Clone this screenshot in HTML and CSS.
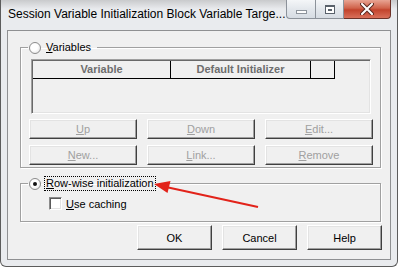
FILE: index.html
```html
<!DOCTYPE html>
<html lang="en">
<head>
    <meta charset="UTF-8">
    <title>Session Variable Initialization Block Variable Target</title>
    <link rel="stylesheet" href="styles.css">
</head>
<body>
    <div class="window">
        <div class="titlebar">
            <span class="title">Session Variable Initialization Block Variable Targe...</span>
            <div class="caption-buttons">
                <span class="cap cap-min"><i class="ico-min"></i></span>
                <span class="cap cap-max"><i class="ico-restore"></i></span>
                <span class="cap cap-close">
                    <svg width="14" height="12" viewBox="0 0 14 12">
                        <path d="M2 1 L12 11 M12 1 L2 11" stroke="#5a2a22" stroke-width="4" stroke-linecap="round"/>
                        <path d="M2 1 L12 11 M12 1 L2 11" stroke="#fff" stroke-width="2" stroke-linecap="round"/>
                    </svg>
                </span>
            </div>
        </div>

        <div class="client">
            <fieldset class="group group-vars">
                <legend class="group-label">
                    <span class="radio"></span>
                    <span class="label-text"><u>V</u>ariables</span>
                </legend>

                <div class="listview">
                    <div class="lv-header">
                        <span class="col col-var">Variable</span>
                        <span class="col col-init">Default Initializer</span>
                        <span class="col col-extra"></span>
                    </div>
                </div>

                <div class="btn-grid">
                    <button class="btn" disabled><u>U</u>p</button>
                    <button class="btn" disabled><u>D</u>own</button>
                    <button class="btn" disabled><u>E</u>dit...</button>
                    <button class="btn" disabled><u>N</u>ew...</button>
                    <button class="btn" disabled><u>L</u>ink...</button>
                    <button class="btn" disabled><u>R</u>emove</button>
                </div>
            </fieldset>

            <fieldset class="group group-rows">
                <legend class="group-label">
                    <span class="radio checked"></span>
                    <span class="label-text focus"><u>R</u>ow-wise initialization</span>
                </legend>

                <label class="check">
                    <span class="checkbox"></span>
                    <span><u>U</u>se caching</span>
                </label>
            </fieldset>

            <div class="dialog-buttons">
                <button class="btn btn-dialog">OK</button>
                <button class="btn btn-dialog">Cancel</button>
                <button class="btn btn-dialog">Help</button>
            </div>
        </div>
    </div>

    <!-- annotation arrow drawn over the dialog -->
    <svg class="annotation" width="398" height="268" viewBox="0 0 398 268">
        <line x1="258" y1="207" x2="166" y2="187" stroke="#e2231a" stroke-width="2.2"/>
        <polygon points="154,184 170.5,181 167.5,193" fill="#e2231a"/>
    </svg>
</body>
</html>
```

FILE: styles.css
```css
:root {
    --face: #f0f0f0;
    --frame: #e9ebee;
    --shadow: #a0a0a0;
    --dark: #696969;
    --disabled: #a0a0a0;
}

* {
    box-sizing: border-box;
}

body {
    margin: 0;
    width: 398px;
    height: 268px;
    overflow: hidden;
    position: relative;
    background: #ffffff;
    font-family: "Liberation Sans", Arial, sans-serif;
    font-size: 11px;
    color: #000;
}

.window {
    width: 398px;
    height: 267px;
    padding: 0 6px 6px 6px;
    background: linear-gradient(#c9cacc, var(--frame) 9px, var(--frame));
    border: 1px solid #5c5c5c;
    border-top: none;
    border-radius: 0 0 6px 6px;
}

.titlebar {
    height: 30px;
    display: flex;
    justify-content: space-between;
}

.title {
    padding: 7px 0 0 1px;
    font-size: 12px;
    line-height: 15px;
    white-space: nowrap;
}

.caption-buttons {
    display: flex;
    height: 19px;
}

.cap {
    display: flex;
    align-items: center;
    justify-content: center;
    width: 29px;
    height: 19px;
    border: 1px solid #8c929a;
    border-top: none;
    background: linear-gradient(#f4f6f8, #e3e7ec 50%, #d6dce3);
}

.cap-min {
    border-radius: 0 0 0 4px;
    border-right: none;
}

.cap-close {
    width: 47px;
    border-left: none;
    border-color: #6d3228;
    border-radius: 0 0 4px 0;
    background: linear-gradient(#e8a493, #d0634b 45%, #c2432c 55%, #d9705a);
}

.ico-min {
    display: block;
    width: 11px;
    height: 4px;
    margin-top: 5px;
    border: 1px solid #8d949c;
    background: #fdfdfd;
}

.ico-restore {
    display: block;
    width: 10px;
    height: 9px;
    border: 1px solid #59616b;
    border-top-width: 2px;
    background: #fff;
    box-shadow: inset 0 0 0 2px #fff, inset 0 0 0 3px #59616b;
}

.client {
    height: 230px;
    background: var(--face);
    border: 1px solid #8f9092;
    display: flex;
    flex-direction: column;
}

.group {
    margin: 0 9px 0 12px;
    padding: 0;
    border: 1px solid var(--shadow);
    box-shadow: inset 1px 1px 0 #fff, 1px 1px 0 #fff;
    min-width: 0;
}

.group-vars {
    margin-top: 10px;
    padding: 5px 0 2px 0;
}

.group-rows {
    margin-top: 9px;
    padding: 7px 0 11px 0;
}

.group-label {
    display: flex;
    align-items: center;
    height: 13px;
    margin-left: 7px;
    padding: 0 6px 0 1px;
    line-height: 13px;
}

.radio {
    width: 12px;
    height: 12px;
    border-radius: 50%;
    border: 1px solid #8b8b8b;
    background: radial-gradient(circle at 40% 40%, #ffffff 40%, #dcdcdc);
    display: flex;
    align-items: center;
    justify-content: center;
}

.radio.checked::after {
    content: "";
    width: 4px;
    height: 4px;
    border-radius: 50%;
    background: #111;
}

.label-text {
    margin-left: 5px;
}

.focus {
    margin-left: 4px;
    padding: 0 1px;
    line-height: 13px;
    outline: 1px dotted #000;
    outline-offset: 0;
}

.listview {
    width: 340px;
    height: 55px;
    margin-left: 10px;
    border: 1px solid;
    border-color: var(--shadow) #fff #fff var(--shadow);
    box-shadow: inset 1px 1px 0 var(--dark), inset -1px -1px 0 #e3e3e3;
    padding: 1px 0 0 1px;
}

.lv-header {
    display: flex;
    height: 18px;
}

.col {
    border-right: 1px solid #000;
    border-bottom: 1px solid #000;
    text-align: center;
    font-weight: bold;
    color: #6d6d6d;
    line-height: 17px;
}

.col-var {
    width: 138px;
}

.col-init {
    width: 140px;
}

.col-extra {
    width: 24px;
}

.btn-grid {
    display: grid;
    grid-template-columns: repeat(3, 108px);
    grid-auto-rows: 20px;
    column-gap: 10px;
    row-gap: 6px;
    margin: 5px 0 0 8px;
}

.btn {
    font-family: inherit;
    font-size: 11px;
    color: #000;
    background: var(--face);
    border: 1px solid;
    border-color: #fff #404040 #404040 #fff;
    box-shadow: inset -1px -1px 0 var(--shadow), inset 1px 1px 0 #e3e3e3;
    padding: 0;
    line-height: 16px;
}

.btn:disabled {
    color: var(--disabled);
}

.check {
    display: flex;
    align-items: center;
    height: 13px;
    margin-left: 28px;
}

.checkbox {
    width: 13px;
    height: 13px;
    margin-right: 4px;
    border: 1px solid;
    border-color: #8b8b8b #fff #fff #8b8b8b;
    box-shadow: inset 1px 1px 0 #5a5a5a, inset -1px -1px 0 #e3e3e3;
    background: #fff;
}

.dialog-buttons {
    display: flex;
    justify-content: flex-end;
    gap: 10px;
    margin: 3px 8px 0 0;
}

.btn-dialog {
    width: 75px;
    height: 25px;
}

.annotation {
    position: absolute;
    left: 0;
    top: 0;
    pointer-events: none;
}
```
